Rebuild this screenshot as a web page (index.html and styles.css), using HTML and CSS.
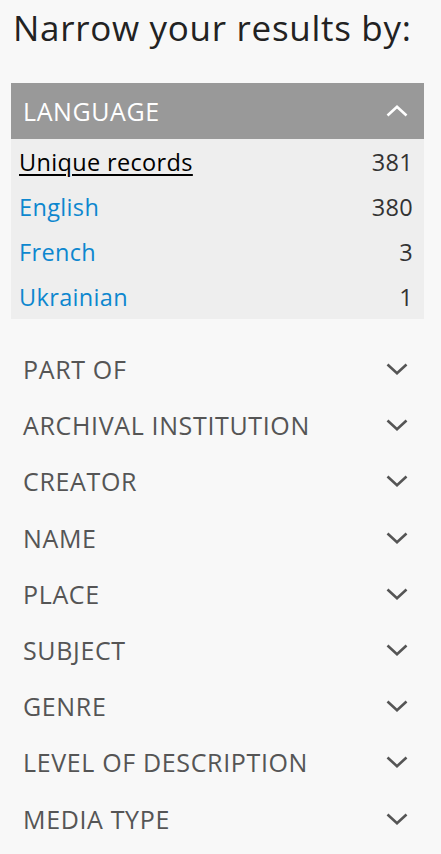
FILE: index.html
```html
<!DOCTYPE html>
<html>
<head>
<meta charset="utf-8">
<link rel="stylesheet" href="styles.css">
</head>
<body>
<div class="sidebar">
  <h2 class="title">Narrow your results by:</h2>
  <section class="facet open">
    <div class="facet-head">
      <span>LANGUAGE</span>
      <svg class="chev" width="22" height="12" viewBox="0 0 22 12"><path d="M1.5 10.5 L11 1.8 L20.5 10.5" fill="none" stroke="#fff" stroke-width="2.6"/></svg>
    </div>
    <ul class="facet-list">
      <li><a class="all">Unique records</a><span class="num">381</span></li>
      <li><a>English</a><span class="num">380</span></li>
      <li><a>French</a><span class="num">3</span></li>
      <li><a>Ukrainian</a><span class="num">1</span></li>
    </ul>
  </section>
  <div class="closed-list">
    <div class="facet-row"><span>PART OF</span><svg class="chev" width="22" height="12" viewBox="0 0 22 12"><path d="M1.5 1.5 L11 10.2 L20.5 1.5" fill="none" stroke="#555" stroke-width="2.6"/></svg></div>
    <div class="facet-row"><span>ARCHIVAL INSTITUTION</span><svg class="chev" width="22" height="12" viewBox="0 0 22 12"><path d="M1.5 1.5 L11 10.2 L20.5 1.5" fill="none" stroke="#555" stroke-width="2.6"/></svg></div>
    <div class="facet-row"><span>CREATOR</span><svg class="chev" width="22" height="12" viewBox="0 0 22 12"><path d="M1.5 1.5 L11 10.2 L20.5 1.5" fill="none" stroke="#555" stroke-width="2.6"/></svg></div>
    <div class="facet-row"><span>NAME</span><svg class="chev" width="22" height="12" viewBox="0 0 22 12"><path d="M1.5 1.5 L11 10.2 L20.5 1.5" fill="none" stroke="#555" stroke-width="2.6"/></svg></div>
    <div class="facet-row"><span>PLACE</span><svg class="chev" width="22" height="12" viewBox="0 0 22 12"><path d="M1.5 1.5 L11 10.2 L20.5 1.5" fill="none" stroke="#555" stroke-width="2.6"/></svg></div>
    <div class="facet-row"><span>SUBJECT</span><svg class="chev" width="22" height="12" viewBox="0 0 22 12"><path d="M1.5 1.5 L11 10.2 L20.5 1.5" fill="none" stroke="#555" stroke-width="2.6"/></svg></div>
    <div class="facet-row"><span>GENRE</span><svg class="chev" width="22" height="12" viewBox="0 0 22 12"><path d="M1.5 1.5 L11 10.2 L20.5 1.5" fill="none" stroke="#555" stroke-width="2.6"/></svg></div>
    <div class="facet-row"><span>LEVEL OF DESCRIPTION</span><svg class="chev" width="22" height="12" viewBox="0 0 22 12"><path d="M1.5 1.5 L11 10.2 L20.5 1.5" fill="none" stroke="#555" stroke-width="2.6"/></svg></div>
    <div class="facet-row"><span>MEDIA TYPE</span><svg class="chev" width="22" height="12" viewBox="0 0 22 12"><path d="M1.5 1.5 L11 10.2 L20.5 1.5" fill="none" stroke="#555" stroke-width="2.6"/></svg></div>
  </div>
</div>
</body>
</html>
```
FILE: styles.css
```css
html, body {
  margin: 0;
  padding: 0;
  background: #f8f8f8;
}
body {
  font-family: "Open Sans", "DejaVu Sans", sans-serif;
}
.sidebar {
  padding: 0 17px 0 11px;
}
.title {
  margin: 0;
  padding: 5px 0 0 2px;
  height: 83px;
  box-sizing: border-box;
  font-size: 35px;
  letter-spacing: 0.7px;
  font-weight: 400;
  line-height: 46px;
  color: #222;
}
.facet-head {
  height: 56px;
  background: #999;
  color: #fff;
  display: flex;
  align-items: center;
  justify-content: space-between;
  padding: 0 16px 0 12px;
  font-size: 25px;
  letter-spacing: 0.6px;
}
.facet-list {
  list-style: none;
  margin: 0;
  padding: 0 11px 0 8px;
  background: #eee;
  height: 180px;
  box-sizing: border-box;
}
.facet-list li {
  height: 45px;
  display: flex;
  align-items: center;
  justify-content: space-between;
  font-size: 23.5px;
  letter-spacing: 0.35px;
}
.facet-list a {
  color: #0d87cf;
}
.facet-list a.all {
  color: #000;
  text-decoration: underline;
  text-underline-offset: 3px;
}
.num {
  color: #333;
  letter-spacing: 0.3px;
}
.closed-list {
  padding-top: 22px;
}
.facet-row {
  height: 56.2px;
  display: flex;
  align-items: center;
  justify-content: space-between;
  padding: 0 16px 0 12px;
  font-size: 25px;
  letter-spacing: 0.65px;
  color: #555;
}
.chev {
  display: block;
}
```
